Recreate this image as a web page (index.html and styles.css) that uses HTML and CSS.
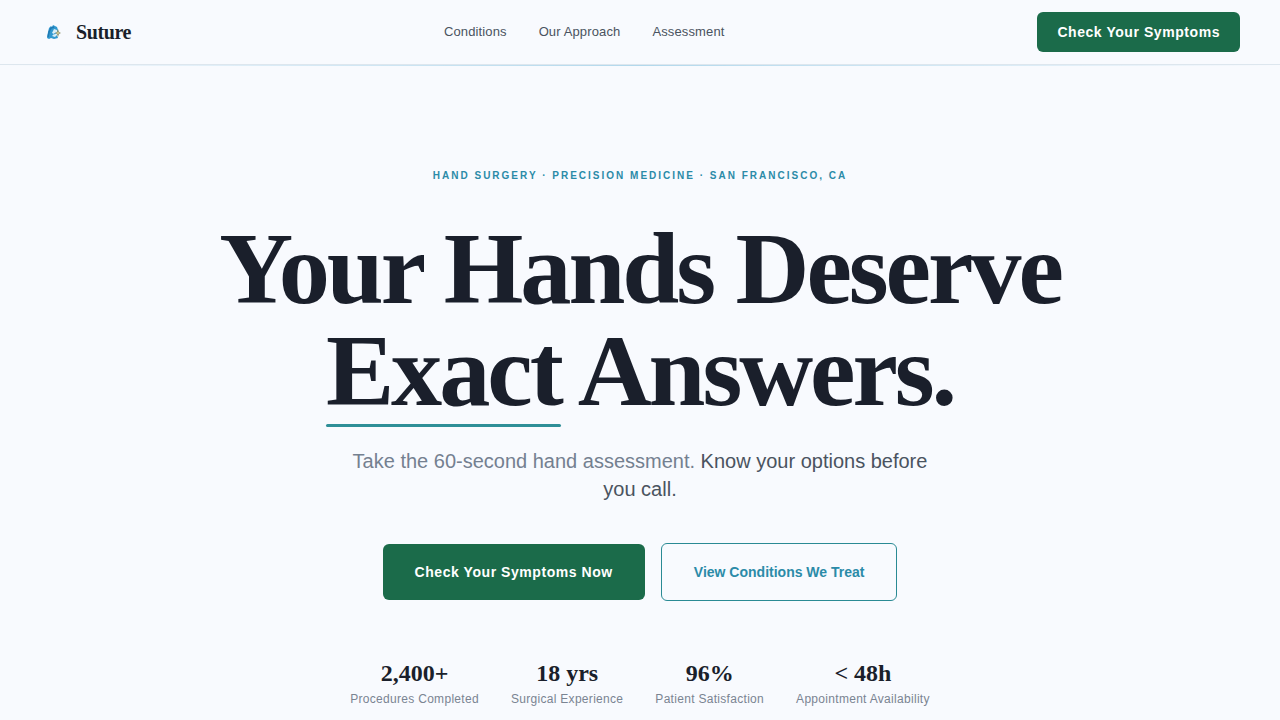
FILE: index.html
```html
<!DOCTYPE html>
<html lang="en">
<head>
    <meta charset="UTF-8">
    <meta name="viewport" content="width=device-width, initial-scale=1.0">
    <title>Suture</title>
    <link rel="stylesheet" href="styles.css">
</head>
<body>
    <header class="header">
        <a href="#" class="brand">
            <svg class="brand-logo" viewBox="0 0 28 28" aria-hidden="true">
                <path d="M7 20 L8 14 L9 10 L11 8 L12 9 L13 7 L15 8 L17 9 L18 12 L17 17 L18 20 L14 21 L11 20 L9 21 Z" fill="#3198cf"/>
                <path d="M8 19 L9 14 L11 10 L14 9" fill="none" stroke="#2079b3" stroke-width="1.5"/>
                <path d="M14 11 L17 12 L17 17 L15 19 L12 18 L14 16 L12 15 Z" fill="#d9eef7"/>
                <path d="M14 16 L16 15" stroke="#3198cf" stroke-width="1"/>
                <path d="M18 11 L19 14 L21 15 L19 16 L18 19 L17 16 L15 15 L17 14 Z" fill="#8d926c"/>
                <circle cx="18" cy="15" r="1" fill="#d8cd94"/>
            </svg>
            <span class="brand-name">Suture</span>
        </a>
        <nav class="nav">
            <a href="#conditions">Conditions</a>
            <a href="#approach">Our Approach</a>
            <a href="#assessment">Assessment</a>
        </nav>
        <button type="button" class="btn btn-primary btn-small">Check Your Symptoms</button>
    </header>

    <main class="hero">
        <p class="eyebrow">Hand Surgery · Precision Medicine · San Francisco, CA</p>
        <h1>Your Hands Deserve <span class="underlined">Exact</span> Answers.</h1>
        <p class="subtitle"><span class="muted">Take the 60-second hand assessment.</span> Know your options before you call.</p>
        <div class="actions">
            <button type="button" class="btn btn-primary">Check Your Symptoms Now</button>
            <a href="#conditions" class="btn btn-outline">View Conditions We Treat</a>
        </div>
        <dl class="stats">
            <div class="stat">
                <dt>Procedures Completed</dt>
                <dd>2,400+</dd>
            </div>
            <div class="stat">
                <dt>Surgical Experience</dt>
                <dd>18 yrs</dd>
            </div>
            <div class="stat">
                <dt>Patient Satisfaction</dt>
                <dd>96%</dd>
            </div>
            <div class="stat">
                <dt>Appointment Availability</dt>
                <dd>&lt; 48h</dd>
            </div>
        </dl>
    </main>
</body>
</html>
```
FILE: styles.css
```css
* {
    box-sizing: border-box;
    margin: 0;
    padding: 0;
}

body {
    background-color: #f8fafe;
    color: #1a1f2b;
    font-family: "Liberation Sans", Arial, sans-serif;
}

a {
    color: inherit;
    text-decoration: none;
}

/* Header */

.header {
    display: flex;
    justify-content: space-between;
    align-items: center;
    height: 65px;
    padding: 0 40px;
    border-bottom: 1px solid #dde6ee;
}

.brand {
    display: flex;
    align-items: center;
    gap: 8px;
}

.brand-logo {
    width: 28px;
    height: 28px;
}

.brand-name {
    font-family: "Liberation Serif", "Times New Roman", serif;
    font-size: 20px;
    font-weight: bold;
    letter-spacing: -0.02em;
}

.nav {
    display: flex;
    gap: 32px;
    font-size: 13px;
    line-height: 16px;
    color: #4a5360;
    letter-spacing: 0.01em;
}

/* Buttons */

.btn {
    padding: 20px 32px;
    border: none;
    border-radius: 6px;
    font-family: inherit;
    font-size: 14px;
    font-weight: bold;
    line-height: 16px;
    cursor: pointer;
}

.btn-primary {
    background-color: #1b6b4a;
    color: #fff;
    letter-spacing: 0.04em;
}

.btn-small {
    padding: 12px 20px;
}

.btn-outline {
    border: 1px solid #2a8a94;
    color: #2b8ba8;
}

/* Hero */

.hero {
    display: flex;
    flex-direction: column;
    align-items: center;
    padding: 103px 40px 8px;
    text-align: center;
    background: linear-gradient(90deg, rgba(178, 216, 236, 0), #b2d8ec, rgba(178, 216, 236, 0)) top / 100% 1px no-repeat;
}

.eyebrow {
    margin-bottom: 34px;
    font-size: 10px;
    font-weight: bold;
    line-height: 16px;
    letter-spacing: 0.2em;
    text-transform: uppercase;
    color: #2b8ba8;
}

h1 {
    max-width: 900px;
    margin-bottom: 24px;
    font-family: "Liberation Serif", "Times New Roman", serif;
    font-size: clamp(48px, 8vw, 112px);
    line-height: 1;
    letter-spacing: -0.03em;
}

.underlined {
    position: relative;
}

.underlined::after {
    content: "";
    position: absolute;
    left: 0;
    right: 0;
    bottom: 0;
    height: 3px;
    border-radius: 2px;
    background-color: #2f8f98;
}

.subtitle {
    max-width: 600px;
    margin-bottom: 40px;
    font-size: 20px;
    line-height: 28px;
    color: #4a5360;
}

.muted {
    color: #748090;
}

.actions {
    display: flex;
    align-items: center;
    gap: 16px;
    margin-bottom: 58px;
}

.stats {
    display: flex;
    gap: 32px;
}

.stat {
    display: flex;
    flex-direction: column-reverse;
    gap: 4px;
}

.stat dt {
    font-size: 12px;
    line-height: 16px;
    letter-spacing: 0.025em;
    color: #7a8492;
}

.stat dd {
    font-family: "Liberation Serif", "Times New Roman", serif;
    font-size: 24px;
    font-weight: bold;
    line-height: 28px;
}
```
